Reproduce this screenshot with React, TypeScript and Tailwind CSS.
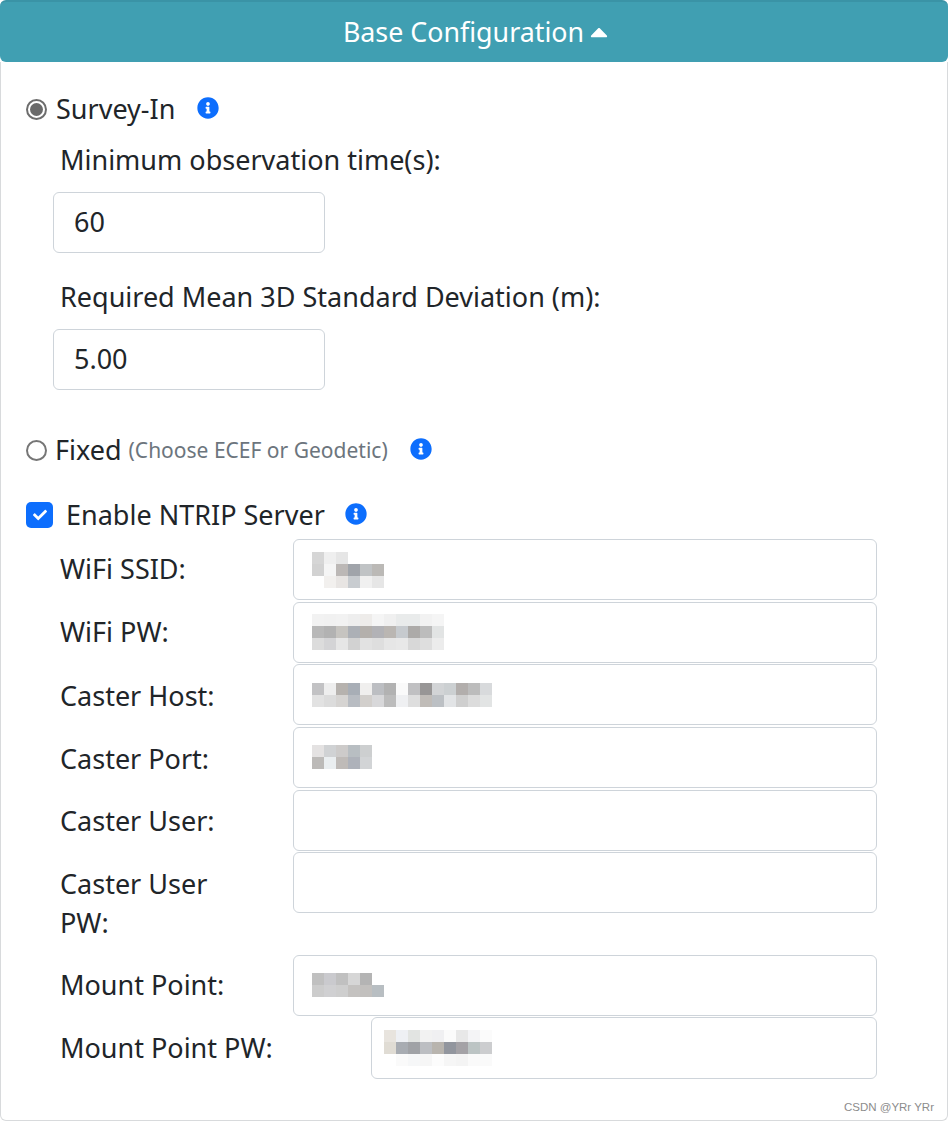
import React from 'react';
import { FaCaretUp, FaCheck, FaInfoCircle } from 'react-icons/fa';

// Colour tiles standing in for the blurred values in the reference
type Tile = string | null;

function Mosaic({ rows, className }: { rows: Tile[][]; className?: string }) {
  return (
    <div className={`flex flex-col ${className ?? ''}`}>
      {rows.map((row, r) => (
        <div key={r} className="flex">
          {row.map((color, c) => (
            <div key={c} className="w-3 h-3" style={{ backgroundColor: color ?? 'transparent' }} />
          ))}
        </div>
      ))}
    </div>
  );
}

const fields: { label: string; leading: string; rows?: Tile[][] }[] = [
  {
    label: 'WiFi SSID:',
    leading: 'h-[61px] leading-[60px]',
    rows: [
      ['#d6d6d6', '#efefef', '#e6e6e6', null, null, null],
      ['#d2d2d2', '#f5f5f5', '#bcb8b6', '#a0a4aa', '#c0c3c5', '#bbb9b6'],
      [null, '#f2f0ee', '#e8e5e3', '#c8ccd0', '#f0f0f0', '#e6e6e6'],
    ],
  },
  {
    label: 'WiFi PW:',
    leading: 'h-[61px] leading-[60px]',
    rows: [
      ['#f2f2f2', '#f1f1f1', '#f2f2f2', '#eeeeee', '#eeecea', '#f5f5f5', '#f0f0f0', '#e9ebeb', '#e9ebeb', '#f2f2f2', '#f5f5f5'],
      ['#b8b8b8', '#b2b2b2', '#c6c4c0', '#acb0b6', '#b4b0ac', '#b2b2b6', '#bab6b2', '#c6cace', '#acaaa8', '#bcbcbc', '#e2e4e4'],
      ['#dcdcdc', '#d4d4d6', '#e6e6e6', '#d2d2d2', '#e2e2e2', '#dedede', '#e6e6e6', '#e8e8e8', '#d8d8d8', '#dedede', '#ececec'],
    ],
  },
  {
    label: 'Caster Host:',
    leading: 'h-[61px] leading-[63px]',
    rows: [
      ['#c2c2c4', '#eeeeee', '#b6b2ae', '#a8aeb6', '#f0efee', '#bcbec2', '#b2b2b2', '#fafafa', '#c0c0c2', '#989696', '#d2d4d6', '#ccd0d2', '#b2aeac', '#bcbcbc', '#d8dadc'],
      ['#e2e2e2', '#dcdcdc', '#d6d4d2', '#b8bcc2', '#d2cfcc', '#d8d8da', '#bcbcbc', '#eff0f2', '#dedede', '#c0bcb8', '#bcc0c4', '#e2e4e6', '#cfcfcf', '#dcdcdc', '#e2e4e4'],
    ],
  },
  {
    label: 'Caster Port:',
    leading: 'h-[61px] leading-[63px]',
    rows: [
      ['#e4e2e2', '#d0d2d4', '#cdcbca', '#b8bec2', '#cdcfd0'],
      ['#bcbab8', '#eaeef0', '#bfbbb8', '#aeb2ba', '#d2d4d6'],
    ],
  },
  { label: 'Caster User:', leading: 'h-[61px] leading-[61px]' },
  { label: 'Caster User PW:', leading: 'pt-[12px] pr-[60px] leading-[39px] h-[101px]' },
  {
    label: 'Mount Point:',
    leading: 'h-[61px] leading-[60px]',
    rows: [
      ['#c0c0c0', '#cacace', '#c0c0c0', '#d6d6d6', '#b4b4b4', null],
      ['#cccccc', '#d0d0d2', '#cecece', '#c4c2c0', '#c2c0be', '#b8bec2'],
    ],
  },
];

function InfoIcon({ className }: { className: string }) {
  return <FaInfoCircle className={`text-[22px] text-[#0d6efd] shrink-0 ${className}`} />;
}

function Field({ label, leading, rows }: { label: string; leading: string; rows?: Tile[][] }) {
  return (
    <div className="flex mb-[1.6px]">
      <label className={`w-[233px] shrink-0 ${leading}`}>{label}</label>
      <div className="w-[584px] h-[61px] border border-[#ced4da] rounded-[6px] bg-white flex items-center pl-[18px]">
        {rows && <Mosaic rows={rows} />}
      </div>
    </div>
  );
}

export default function App() {
  return (
    <div className="relative w-[950px] h-[1123px] bg-white text-[#212529] text-[27px] font-['Noto_Sans','Open_Sans',sans-serif] overflow-hidden">
      {/* Collapse button */}
      <div className="w-[948px] h-[62px] bg-[#409fb2] border-t-2 border-[#3a93a6] rounded-[6px] text-white flex items-center justify-center pl-[8px]">
        <span className="text-[26.8px]">Base Configuration</span>
        <FaCaretUp className="text-[28px] ml-[1px]" />
      </div>

      {/* Card body */}
      <div className="w-[948px] h-[1059px] border border-t-0 border-[#d8dadc] rounded-b-[6px] pl-[25px] pt-[27px]">
        <div className="flex items-center h-[40px]">
          <span className="w-[21px] h-[21px] rounded-full border-2 border-[#6d6d6d] flex items-center justify-center">
            <span className="w-[13px] h-[13px] rounded-full bg-[#6a6a6a]" />
          </span>
          <span className="ml-[9px]">Survey-In</span>
          <InfoIcon className="ml-[22px] -mt-[3px]" />
        </div>

        <div className="pl-[27px]">
          <div className="pl-[7px] mt-[11px] leading-[40px]">Minimum observation time(s):</div>
          <div className="mt-[12px] w-[272px] h-[61px] border border-[#ced4da] rounded-[6px] flex items-center pl-[20px]">60</div>
          <div className="pl-[7px] mt-[24px] leading-[40px]">Required Mean 3D Standard Deviation (m):</div>
          <div className="mt-[12px] w-[272px] h-[61px] border border-[#ced4da] rounded-[6px] flex items-center pl-[20px]">5.00</div>
        </div>

        <div className="flex items-center h-[40px] mt-[40px]">
          <span className="w-[21px] h-[21px] rounded-full border-2 border-[#767676]" />
          <span className="ml-[8px]">Fixed</span>
          <span className="ml-[7px] text-[21px] text-[#6c757d] mt-[2px]">(Choose ECEF or Geodetic)</span>
          <InfoIcon className="ml-[22px] -mt-[3px]" />
        </div>

        <div className="flex items-center h-[40px] mt-[25px]">
          <span className="w-[27px] h-[26px] rounded-[5px] bg-[#0d6efd] flex items-center justify-center">
            <FaCheck className="text-white text-[14px]" />
          </span>
          <span className="ml-[13px]">Enable NTRIP Server</span>
          <InfoIcon className="ml-[20px] -mt-[3px]" />
        </div>

        <div className="pl-[34px] mt-[4.2px]">
          {fields.map((f) => (
            <Field key={f.label} label={f.label} leading={f.leading} rows={f.rows} />
          ))}
          <div className="flex">
            <label className="w-[311px] shrink-0 h-[61px] leading-[61px]">Mount Point PW:</label>
            <div className="w-[506px] h-[62px] border border-[#ced4da] rounded-[6px] flex items-center pl-[12px] -mt-[0.4px]">
              <Mosaic
                rows={[
                  ['#e8e4de', '#eef0f4', '#e2e4e2', '#f2f2f2', '#f0f0f2', '#fbfbfb', '#e8e8e8', '#f4f4f6', '#fbfbfb'],
                  ['#e0dcd4', '#a8acb2', '#a0a2a6', '#bcbec2', '#b8b4ae', '#92969e', '#a4a2a6', '#bcc4c4', '#cccdcf'],
                  [null, '#fafafa', '#f6f7f8', '#f6f6f6', '#fcfcfc', '#f6f6f6', '#f4f4f4', '#fafafa', '#fafafa'],
                ]}
              />
            </div>
          </div>
        </div>
      </div>

      {/* Watermark */}
      <div className="absolute right-[16px] bottom-[7px] text-[11.5px] text-[#8c8c8c] font-['Liberation_Sans',sans-serif]">CSDN @YRr YRr</div>
    </div>
  );
}
